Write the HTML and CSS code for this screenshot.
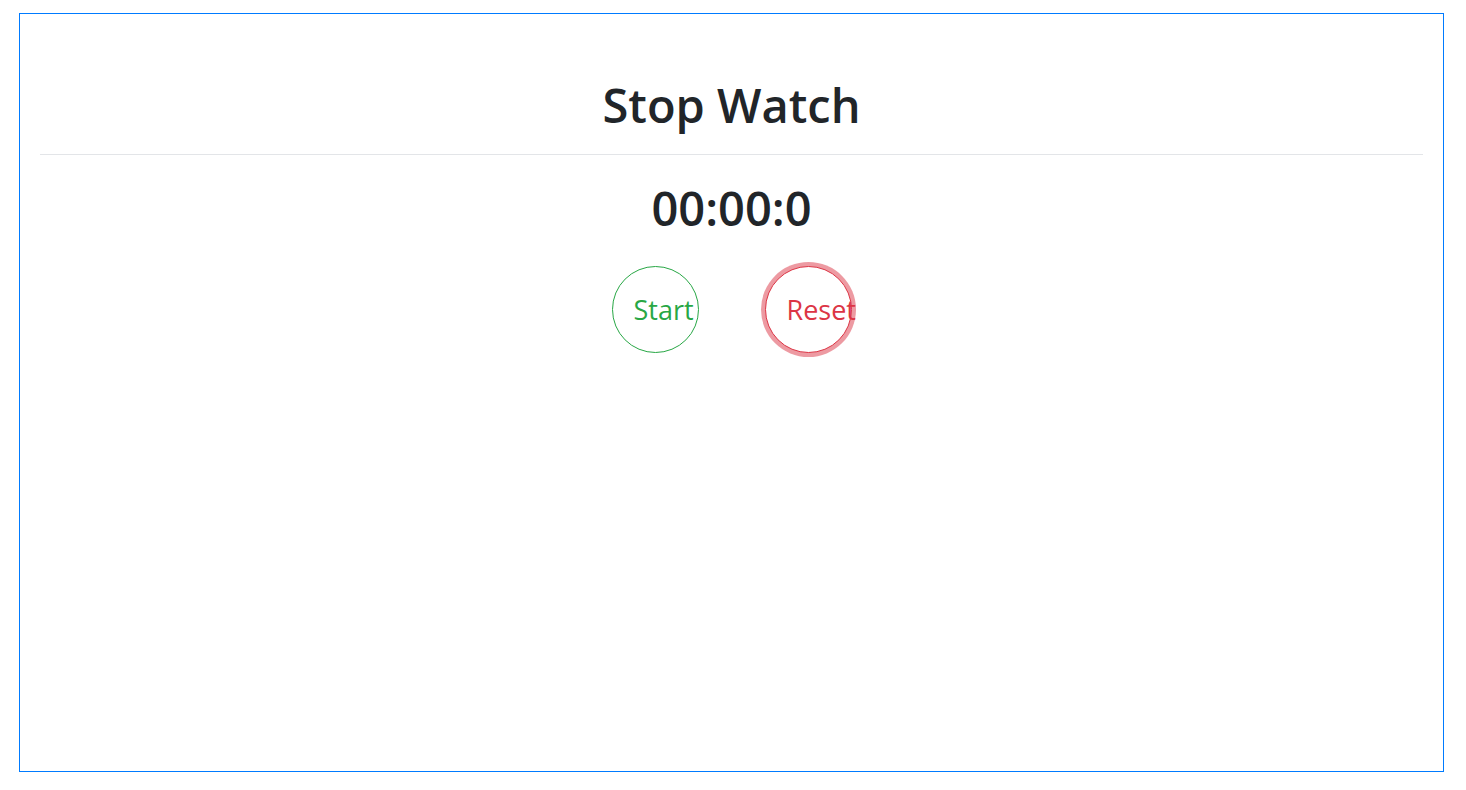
FILE: index.html
```html
<!DOCTYPE html>
<html lang="en">
<head>
<meta charset="utf-8">
<title>Stop Watch</title>
<link rel="stylesheet" href="styles.css">
</head>
<body>
<div class="page">
  <div class="card">
    <h1 class="title">Stop Watch</h1>
    <hr class="divider">
    <h1 class="time">00:00:0</h1>
    <div class="controls">
      <button class="btn btn-start" type="button">Start</button>
      <button class="btn btn-reset" type="button">Reset</button>
    </div>
  </div>
</div>
</body>
</html>
```
FILE: styles.css
```css
html, body {
  margin: 0;
  padding: 0;
  background: #fff;
}
body {
  font-family: "Open Sans", "Noto Sans", sans-serif;
  color: #212529;
}
.page {
  padding: 13px 22px 18px 19px;
  height: 790px;
  box-sizing: border-box;
}
.card {
  height: 100%;
  box-sizing: border-box;
  border: 1px solid #007bff;
  padding: 0 20px;
  display: flex;
  flex-direction: column;
  align-items: stretch;
}
.title,
.time {
  font-size: 47px;
  font-weight: 600;
  line-height: 1.2;
  text-align: center;
  margin: 0;
}
.title {
  margin-top: 63px;
}
.divider {
  margin: 21px 0 0;
  border: 0;
  border-top: 1px solid #e3e5e8;
  height: 0;
}
.time {
  margin-top: 25px;
}
.controls {
  display: flex;
  justify-content: center;
  gap: 66px;
  margin-top: 29px;
}
.btn {
  width: 87px;
  height: 87px;
  border-radius: 50%;
  background: #fff;
  border: 1px solid;
  padding: 0 21px;
  font-family: inherit;
  font-size: 27px;
  font-weight: 400;
  white-space: nowrap;
  text-align: center;
  box-sizing: border-box;
  cursor: pointer;
  outline: none;
}
.btn-start {
  color: #28a745;
  border-color: #28a745;
}
.btn-reset {
  color: #dc3545;
  border-color: #dc3545;
  box-shadow: 0 0 0 4px rgba(220, 53, 69, 0.5);
}
```
